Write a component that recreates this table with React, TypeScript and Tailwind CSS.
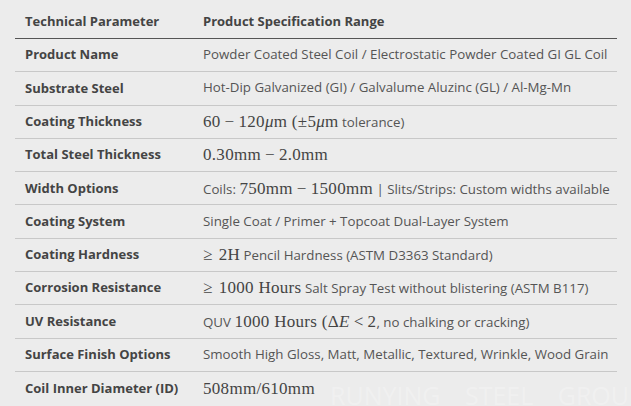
import React from "react";

const M: React.FC<{ children: React.ReactNode }> = ({ children }) => (
  <span className="font-['Liberation_Serif',serif] text-[17px] tracking-[0.3px] text-[#444]">{children}</span>
);

const I: React.FC<{ children: React.ReactNode }> = ({ children }) => <i>{children}</i>;

// operator with KaTeX-like spacing
const Op: React.FC<{ children: React.ReactNode }> = ({ children }) => (
  <span className="mx-[4px]">{children}</span>
);

const rows: { label: string; value: React.ReactNode }[] = [
  { label: "Product Name", value: "Powder Coated Steel Coil / Electrostatic Powder Coated GI GL Coil" },
  { label: "Substrate Steel", value: "Hot-Dip Galvanized (GI) / Galvalume Aluzinc (GL) / Al-Mg-Mn" },
  {
    label: "Coating Thickness",
    value: (
      <>
        <M>
          60<Op>−</Op>120<I>μ</I>m (±5<I>μ</I>m
        </M>{" "}
        tolerance)
      </>
    ),
  },
  {
    label: "Total Steel Thickness",
    value: (
      <M>
        0.30mm<Op>−</Op>2.0mm
      </M>
    ),
  },
  {
    label: "Width Options",
    value: (
      <>
        Coils:{" "}
        <M>
          750mm<Op>−</Op>1500mm
        </M>{" "}
        | Slits/Strips: Custom widths available
      </>
    ),
  },
  { label: "Coating System", value: "Single Coat / Primer + Topcoat Dual-Layer System" },
  {
    label: "Coating Hardness",
    value: (
      <>
        <M>
          ≥<span className="ml-[6px]">2H</span>
        </M>{" "}
        Pencil Hardness (ASTM D3363 Standard)
      </>
    ),
  },
  {
    label: "Corrosion Resistance",
    value: (
      <>
        <M>
          ≥<span className="ml-[6px]">1000 Hours</span>
        </M>{" "}
        Salt Spray Test without blistering (ASTM B117)
      </>
    ),
  },
  {
    label: "UV Resistance",
    value: (
      <>
        QUV{" "}
        <M>
          1000 Hours (Δ<I>E</I>
          <Op>&lt;</Op>2
        </M>
        , no chalking or cracking)
      </>
    ),
  },
  { label: "Surface Finish Options", value: "Smooth High Gloss, Matt, Metallic, Textured, Wrinkle, Wood Grain" },
  { label: "Coil Inner Diameter (ID)", value: <M>508mm/610mm</M> },
];

export default function App() {
  return (
    <div className="relative w-[631px] h-[406px] overflow-hidden bg-[#ececec] font-['Open_Sans',sans-serif]">
      <div className="mx-[15px] w-[602px]">
        {/* header */}
        <div className="flex h-[39px] items-center pt-[5px] border-b border-[#555] text-[13px] font-bold text-[#444]">
          <div className="w-[188px] pl-[10px]">Technical Parameter</div>
          <div className="flex-1">Product Specification Range</div>
        </div>

        {rows.map((r, i) => (
          <div
            key={r.label}
            className={
              "flex h-[33.3px] items-center text-[13.3px] " +
              (i < rows.length - 1 ? "border-b border-[#c8c8c8]" : "")
            }
          >
            <div className="w-[188px] pl-[10px] text-[13px] font-bold text-[#444]">{r.label}</div>
            <div className="flex-1 whitespace-nowrap text-[#555]">{r.value}</div>
          </div>
        ))}
      </div>

      {/* watermark */}
      <div className="absolute left-[330px] top-[383px] whitespace-nowrap text-[25px] leading-none [word-spacing:18px] text-white/25 select-none">
        RUNYING STEEL GROUP
      </div>
    </div>
  );
}
